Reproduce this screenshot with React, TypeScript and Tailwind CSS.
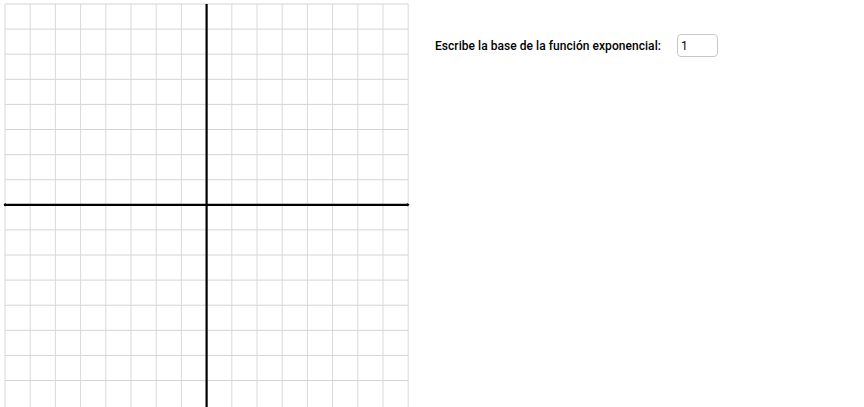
import React from "react";

export default function App() {
  const step = 25.2;
  const x0 = 5;
  const y0 = 4;
  const n = 16;
  const verticals = Array.from({ length: n + 1 }, (_, i) => x0 + i * step);
  const horizontals = Array.from({ length: n }, (_, i) => y0 + i * 25.1);
  const axisX = x0 + 8 * step;
  const axisY = y0 + 8 * 25.1;
  const right = x0 + n * step;
  return (
    <div className="w-[864px] h-[407px] bg-white flex overflow-hidden" style={{ fontFamily: "Roboto, 'Liberation Sans', sans-serif" }}>
      <svg width="412" height="407" viewBox="0 0 412 407" className="shrink-0 block">
        {verticals.map((x, i) => (
          <line key={"v" + i} x1={x} y1={y0} x2={x} y2={407} stroke="#d9d9d9" strokeWidth="1" />
        ))}
        {horizontals.map((y, i) => (
          <line key={"h" + i} x1={x0} y1={y} x2={right} y2={y} stroke="#d4d4d4" strokeWidth="1" />
        ))}
        <line x1={axisX} y1={y0} x2={axisX} y2={407} stroke="#000" strokeWidth="2.2" />
        <line x1={x0 - 1} y1={axisY} x2={right} y2={axisY} stroke="#000" strokeWidth="2.2" />
        <path d={`M ${right - 1} ${axisY - 1.8} L ${right + 1.5} ${axisY} L ${right - 1} ${axisY + 1.8} Z`} fill="#000" />
        <path d={`M ${x0 + 1} ${axisY - 1.8} L ${x0 - 1.5} ${axisY} L ${x0 + 1} ${axisY + 1.8} Z`} fill="#000" />
      </svg>
      <div className="flex items-center h-[23px] mt-[34px] ml-[23px]">
        <span className="text-[12px] font-medium text-black tracking-[0.05px]">Escribe la base de la función exponencial:</span>
        <div className="ml-[16px] w-[41px] h-[23px] border border-[#c8c8c8] rounded-[4px] flex items-center pl-[3px] text-[12px] text-black">1</div>
      </div>
    </div>
  );
}
